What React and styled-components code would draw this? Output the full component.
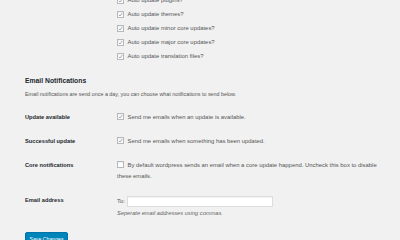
import React from "react";
import styled, { createGlobalStyle } from "styled-components";

const Global = createGlobalStyle`
  html, body { margin: 0; padding: 0; background: #f1f1f1; overflow: hidden; }
  body { font-family: "Liberation Sans", Arial, sans-serif; color: #555; }
`;

const Page = styled.div`
  width: 400px;
  height: 240px;
  overflow: hidden;
  padding-left: 25px;
  box-sizing: border-box;
`;

const Inner = styled.div`
  margin-top: -7px;
`;

const Row = styled.div`
  display: grid;
  grid-template-columns: 92px 264px;
  align-items: start;
  margin-top: ${(p) => p.$gap || 0}px;
`;

const Label = styled.div`
  font-size: 5.7px;
  font-weight: 700;
  color: #23282d;
  line-height: 11px;
`;

const Cell = styled.div`
  font-size: 5.9px;
  line-height: 11px;
  color: #555;
`;

const Line = styled.label`
  display: flex;
  align-items: center;
  height: 14px;
`;

const Wrap = styled.div`
  font-size: 5.9px;
  line-height: 11px;
  color: #555;
`;

const Box = styled.span`
  display: inline-block;
  width: 5px;
  height: 5px;
  border: 1px solid #b4b9be;
  background: #fefefe;
  box-shadow: inset 0 1px 1px rgba(0,0,0,0.06);
  vertical-align: -1px;
  margin-right: 3.5px;
  position: relative;
  flex: none;
  svg { position: absolute; left: 0; top: 0; }
`;

const Heading = styled.h2`
  margin: 12px 0 0;
  font-size: 6.8px;
  line-height: 11px;
  font-weight: 700;
  color: #23282d;
`;

const Desc = styled.p`
  margin: 3px 0 0;
  font-size: 5.35px;
  line-height: 11px;
  color: #555;
`;

const ToRow = styled.div`
  display: flex;
  align-items: center;
  gap: 2px;
  font-size: 5.9px;
  height: 12px;
  color: #555;
`;

const Input = styled.div`
  width: 146px;
  height: 11px;
  box-sizing: border-box;
  background: #fff;
  border: 1px solid #ddd;
  box-shadow: inset 0 1px 1px rgba(0,0,0,0.05);
`;

const Hint = styled.div`
  font-size: 5.7px;
  font-style: italic;
  color: #666;
  line-height: 11px;
  margin-top: 1px;
`;

const Button = styled.button`
  margin-top: ${(p) => p.$gap}px;
  height: 14px;
  width: 43px;
  padding: 0;
  background: #0085ba;
  border: 1px solid #0073aa;
  border-radius: 2px;
  color: #fff;
  font-family: "Liberation Sans", Arial, sans-serif;
  font-size: 5.2px;
  line-height: 12px;
  white-space: nowrap;
  display: block;
  box-shadow: 0 1px 0 #006799;
`;

const Check = ({ checked }) => (
  <Box>
    {checked && (
      <svg width="5" height="5" viewBox="0 0 10 10">
        <path d="M1.5 5.5 L4 8 L8.5 2" fill="none" stroke="#777" strokeWidth="1.3" />
      </svg>
    )}
  </Box>
);

const autoItems = [
  "Auto update plugins?",
  "Auto update themes?",
  "Auto update minor core updates?",
  "Auto update major core updates?",
  "Auto update translation files?",
];

export default function App() {
  return (
    <Page>
      <Global />
      <Inner>
        <Row>
          <div />
          <Cell>
            {autoItems.map((t) => (
              <Line key={t}>
                <Check checked />
                {t}
              </Line>
            ))}
          </Cell>
        </Row>
        <Heading>Email Notifications</Heading>
        <Desc>Email notifications are send once a day, you can choose what notifications to send below.</Desc>
        <Row $gap={12}>
          <Label>Update available</Label>
          <Wrap><Check checked />Send me emails when an update is available.</Wrap>
        </Row>
        <Row $gap={13}>
          <Label>Successful update</Label>
          <Wrap><Check checked />Send me emails when something has been updated.</Wrap>
        </Row>
        <Row $gap={13}>
          <Label>Core notifications</Label>
          <Wrap><Check />By default wordpress sends an email when a core update happend. Uncheck this box to disable these emails.</Wrap>
        </Row>
        <Row $gap={13}>
          <Label>Email address</Label>
          <div>
            <ToRow>To:<Input /></ToRow>
            <Hint>Seperate email addresses using commas.</Hint>
          </div>
        </Row>
        <Button $gap={13}>Save Changes</Button>
      </Inner>
    </Page>
  );
}
